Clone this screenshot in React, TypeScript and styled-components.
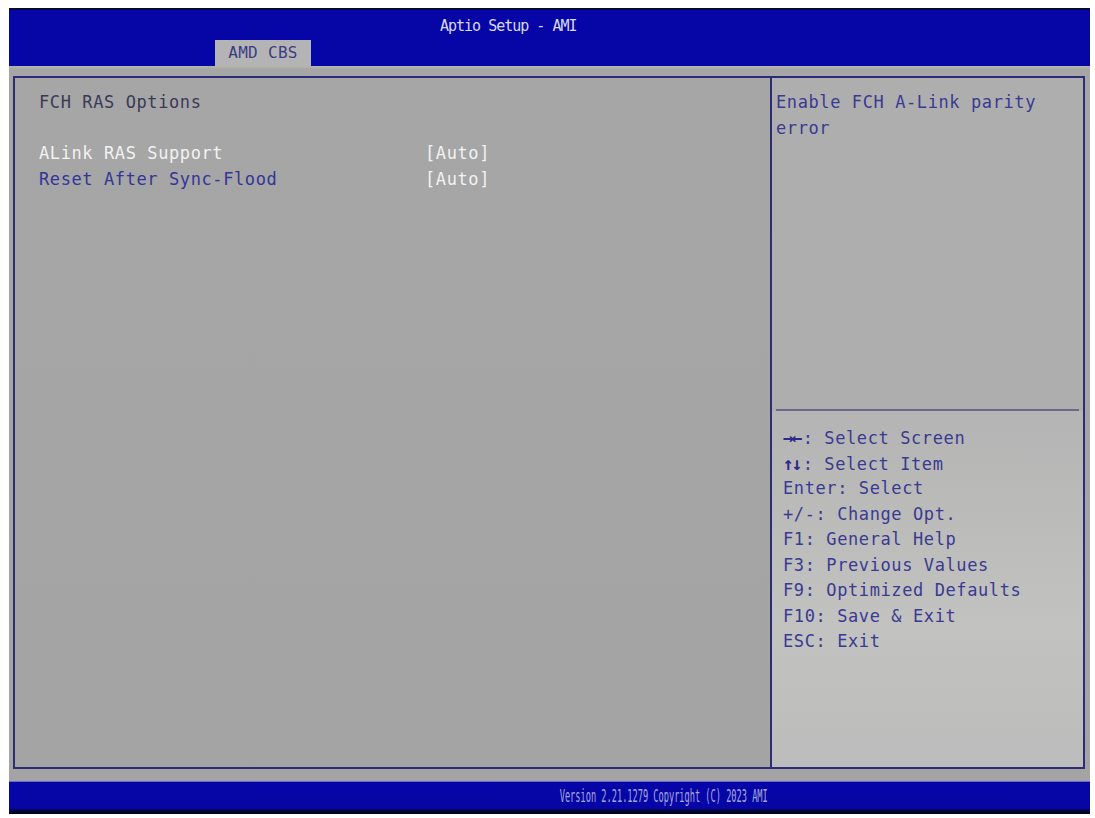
import React from 'react'
import styled, { createGlobalStyle } from 'styled-components'

const GlobalStyle = createGlobalStyle`
  html, body {
    margin: 0;
    padding: 0;
    background: #ffffff;
  }
  body {
    font-family: "DejaVu Sans Mono", "Liberation Mono", monospace;
  }
`

const Screen = styled.div`
  margin: 8px 5px 4px 9px;
  width: 1081px;
  height: 806px;
  display: flex;
  flex-direction: column;
  background: #a4a4a4;
  overflow: hidden;
`

const Header = styled.header`
  height: 58px;
  box-sizing: border-box;
  background: #0606a6;
  border-top: 2px solid #0a0a3a;
  display: flex;
  flex-direction: column;
`

const Title = styled.div`
  height: 30px;
  box-sizing: border-box;
  padding: 8px 0 0 431px;
  font-size: 15px;
  letter-spacing: -1px;
  color: #d8d8ee;
  line-height: 17px;
`

const TabRow = styled.div`
  flex: 1;
  display: flex;
  align-items: flex-end;
  padding-left: 206px;
`

const Tab = styled.div`
  width: 96px;
  height: 26px;
  background: #b4b4b6;
  color: #3c3c84;
  font-size: 16px;
  line-height: 26px;
  text-align: center;
  letter-spacing: 0.3px;
`

const Body = styled.main`
  flex: 1;
  padding: 10px 5px 12px 4px;
  display: flex;
  background: linear-gradient(#b8b6a8 0, #a6a6a6 3px, #a4a4a4 100%);
`

const Panel = styled.div`
  flex: 1;
  display: flex;
  border: 2px solid #2c2c78;
`

const MainColumn = styled.section`
  width: 755px;
  padding: 12px 0 0 24px;
  box-sizing: border-box;
`

const Line = styled.div<{ $color?: string }>`
  height: 25.5px;
  line-height: 25.5px;
  font-size: 17px;
  letter-spacing: 0.6px;
  color: ${p => p.$color || '#3a3a58'};
  white-space: pre;
`

const Setting = styled.div`
  display: grid;
  grid-template-columns: 386px auto;
`

const SidePanel = styled.aside`
  flex: 1;
  display: flex;
  flex-direction: column;
  border-left: 2px solid #2c2c78;
  background: #aeaeae;
`

const HelpBox = styled.div`
  height: 331px;
  padding: 12px 0 0 4px;
  box-sizing: border-box;
`

const Divider = styled.hr`
  margin: 0 4px;
  border: none;
  height: 2px;
  background: #6a6a88;
`

const KeysBox = styled.div`
  flex: 1;
  padding: 14px 0 0 11px;
  background: linear-gradient(#b4b4b4, #c2c2c0 60%, #bcbcbc);
`

const KeyArrow = styled.span`
  font-weight: bold;
  font-size: 18px;
  color: #2a2a8c;
  letter-spacing: -2px;
  margin-right: 2px;
`

const Footer = styled.footer`
  height: 33px;
  box-sizing: border-box;
  background: linear-gradient(#0606a8 0, #0606a6 26px, #050530 29px, #000010 33px);
  border-top: 1px solid #6a6ad0;
  display: flex;
  justify-content: center;
  padding: 4px 0 0 228px;
`

const FooterText = styled.span`
  display: inline-block;
  font-size: 18px;
  line-height: 19px;
  color: #a8a8dc;
  transform: scaleX(0.48);
  white-space: pre;
`

const helpColor = '#3a3a92'

const keys: { key: React.ReactNode; text: string }[] = [
  { key: <KeyArrow>→←</KeyArrow>, text: ': Select Screen' },
  { key: <KeyArrow>↑↓</KeyArrow>, text: ': Select Item' },
  { key: 'Enter', text: ': Select' },
  { key: '+/-', text: ': Change Opt.' },
  { key: 'F1', text: ': General Help' },
  { key: 'F3', text: ': Previous Values' },
  { key: 'F9', text: ': Optimized Defaults' },
  { key: 'F10', text: ': Save & Exit' },
  { key: 'ESC', text: ': Exit' },
]

export default function App() {
  return (
    <>
      <GlobalStyle />
      <Screen>
        <Header>
          <Title>Aptio Setup - AMI</Title>
          <TabRow>
            <Tab>AMD CBS</Tab>
          </TabRow>
        </Header>

        <Body>
          <Panel>
            <MainColumn>
              <Line>FCH RAS Options</Line>
              <Line> </Line>
              <Setting>
                <Line $color='#f2f2f2'>ALink RAS Support</Line>
                <Line $color='#f2f2f2'>[Auto]</Line>
              </Setting>
              <Setting>
                <Line $color='#34349a'>Reset After Sync-Flood</Line>
                <Line $color='#f2f2f2'>[Auto]</Line>
              </Setting>
            </MainColumn>

            <SidePanel>
              <HelpBox>
                <Line $color={helpColor}>Enable FCH A-Link parity</Line>
                <Line $color={helpColor}>error</Line>
              </HelpBox>
              <Divider />
              <KeysBox>
                {keys.map((k, i) => (
                  <Line key={i} $color={helpColor}>
                    {k.key}{k.text}
                  </Line>
                ))}
              </KeysBox>
            </SidePanel>
          </Panel>
        </Body>

        <Footer>
          <FooterText>Version 2.21.1279 Copyright (C) 2023 AMI</FooterText>
        </Footer>
      </Screen>
    </>
  )
}
